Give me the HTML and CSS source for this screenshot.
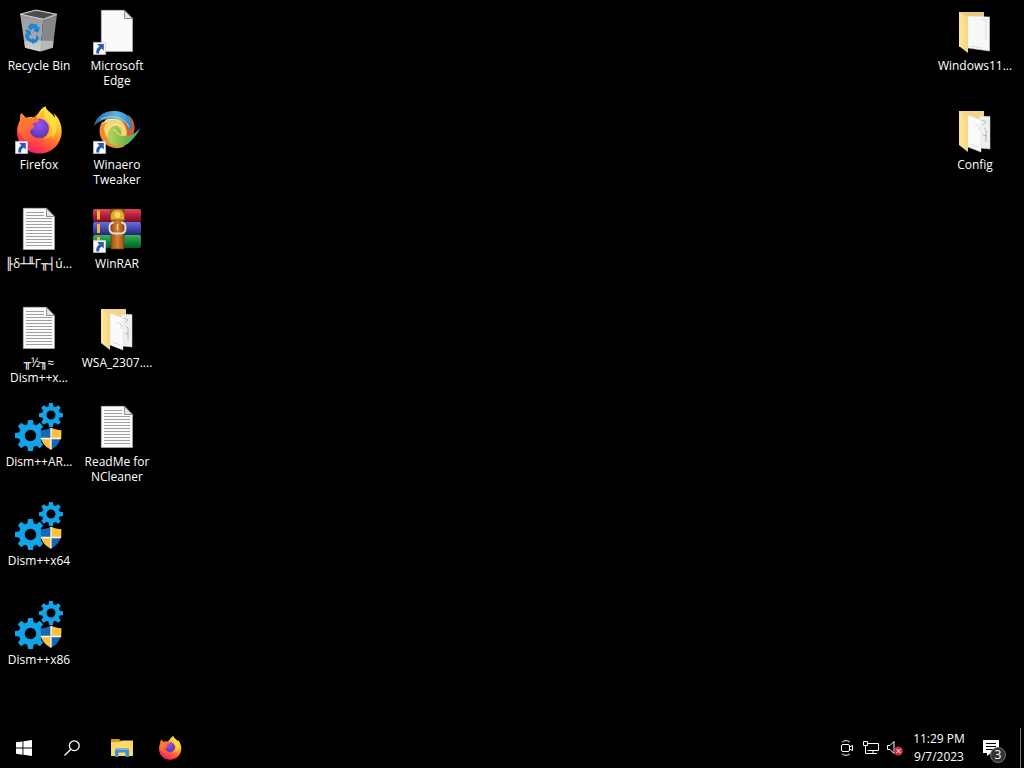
FILE: index.html
```html
<!DOCTYPE html>
<html lang="en">
<head>
<meta charset="utf-8">
<title>Desktop</title>
<link rel="stylesheet" href="styles.css">
</head>
<body>
<svg class="defs" aria-hidden="true">
  <defs>
    <linearGradient id="ffBody" x1="0.8" y1="0" x2="0.25" y2="1">
      <stop offset="0" stop-color="#fff44f"/><stop offset="0.3" stop-color="#ffc133"/><stop offset="0.55" stop-color="#ff7a2b"/><stop offset="0.8" stop-color="#ff3a4c"/><stop offset="1" stop-color="#e21a70"/>
    </linearGradient>
    <linearGradient id="ffFox" x1="0" y1="0" x2="0.6" y2="1">
      <stop offset="0" stop-color="#ff8f2c"/><stop offset="1" stop-color="#ff4f3c"/>
    </linearGradient>
    <radialGradient id="ffGlobe" cx="0.5" cy="0.3" r="0.7">
      <stop offset="0" stop-color="#9a4ff0"/><stop offset="1" stop-color="#5638b4"/>
    </radialGradient>
    <linearGradient id="binFront" x1="0" y1="0" x2="0" y2="1">
      <stop offset="0" stop-color="#9a9c9f"/><stop offset="0.7" stop-color="#a9abad"/><stop offset="1" stop-color="#d4d4d4"/>
    </linearGradient>
    <linearGradient id="folderBack" x1="0" y1="0" x2="1" y2="0">
      <stop offset="0" stop-color="#ffe7a4"/><stop offset="1" stop-color="#f3d681"/>
    </linearGradient>
    <linearGradient id="swirlBlue"><stop offset="0" stop-color="#2169a5"/><stop offset="0.6" stop-color="#5db5e4"/><stop offset="1" stop-color="#2b83bd"/></linearGradient>
    <linearGradient id="swirlGreen"><stop offset="0" stop-color="#b9d45a"/><stop offset="0.6" stop-color="#72b548"/><stop offset="1" stop-color="#4b9dab"/></linearGradient>
    <linearGradient id="bookRed" x1="0" y1="0" x2="0" y2="1"><stop offset="0" stop-color="#d94a5c"/><stop offset="0.5" stop-color="#b51e3a"/><stop offset="1" stop-color="#75102a"/></linearGradient>
    <linearGradient id="bookBlue" x1="0" y1="0" x2="0" y2="1"><stop offset="0" stop-color="#6970d8"/><stop offset="0.5" stop-color="#4347ae"/><stop offset="1" stop-color="#262870"/></linearGradient>
    <linearGradient id="bookGreen" x1="0" y1="0" x2="0" y2="1"><stop offset="0" stop-color="#3cb35c"/><stop offset="0.5" stop-color="#118b3b"/><stop offset="1" stop-color="#095a25"/></linearGradient>
    <linearGradient id="belt" x1="0" y1="0" x2="1" y2="0"><stop offset="0" stop-color="#9a4f17"/><stop offset="0.5" stop-color="#d58336"/><stop offset="1" stop-color="#9a4f17"/></linearGradient>
  </defs>

  <symbol id="shortcut" viewBox="0 0 48 48">
    <path fill="#fafafa" stroke="#b5b5b5" stroke-width="0.5" d="M0.3 35.3h12.4v12.4H0.3z"/>
    <path fill="#2b5aa8" d="M4.200 37h6.600v6.600l-2.100-2.100c-1.900 1.300-2.700 2.700-2.600 5H3.400c-.6-3.200.7-5.500 3-7z"/>
  </symbol>

  <symbol id="recycle" viewBox="0 0 48 48">
    <path fill="#64676a" d="M5.200 7.200 21 3l21 4.300-13.700 5z"/>
    <path fill="#494c4f" d="M8 7.500 21 4.300l17 3-10 4z"/>
    <path fill="url(#binFront)" d="m5.200 7.200 23.100 5.100-3 32.200-15.300-3.800z"/>
    <path fill="#85878a" d="M28.300 12.300 42 7.300l-4.200 33.400-12.500 3.800z"/>
    <path fill="#cfcfcf" d="m9.300 34.500 15-1 14.200.5-.7 6.700-12.500 3.800-15.300-3.800z" opacity=".7"/>
    <path fill="none" stroke="#d4d6d8" stroke-width="1" d="M5.200 7.200 21 3l21 4.300-13.700 5z"/>
    <g fill="#1e83d2">
      <path d="m12.500 21 3-4.500 6 .8 1.500 3 1.800-.6-1.300 6-5.500-2 1.800-1.200-1.500-1.500-2 2.500z"/>
      <path d="m10 22.500 5.200 1.100 1.200 5-1.900-.9-.8 2.300 2.500 1.900-.2 3.500-4.500-2.600-1.500-4 1.500-2.700z"/>
      <path d="m21.500 27 2.700 4.500-2.700 4-2.800.3v2l-3.800-4.200 3.900-2.800v1.800h1.400l.6-1.500z"/>
    </g>
  </symbol>

  <symbol id="page" viewBox="0 0 48 48">
    <path fill="#fafafa" stroke="#b9b9b9" stroke-width="0.6" d="M8.300 3.300h23.400l7.800 8v33.200H8.300z"/>
    <path fill="#e4e4e4" stroke="#777" stroke-width="0.8" d="M31.500 3.500v8h8z"/>
  </symbol>

  <symbol id="text" viewBox="0 0 48 48">
    <use href="#page"/>
    <path stroke="#a0a0a0" stroke-width="1" d="M11 7.500h18M11 10.500h18M11 13.500h26M11 16.500h26M11 19.500h26M11 22.500h26M11 25.500h26M11 28.500h26M11 31.500h26M11 34.500h26M11 37.500h26M11 40.500h26"/>
  </symbol>

  <symbol id="firefox" viewBox="0 0 48 48">
    <path fill="url(#ffBody)" d="M30.500.2c.5 4.700 7 6.600 9.500 11.800-.1-2-.7-3.500-1.500-5 5.200 4.200 8.400 11.500 8.200 18.700C46.300 38.500 36.500 47.500 24.300 47.500 11.500 47.500 2 38 2 25.500c0-4.500 1.200-7.500 3-11-.2-2.700.3-5.200 1.300-7.200 1.800 1.700 3.200 3 4.500 4.500 2.800-1 5.200-1.200 8-.4l4-3.300C24.500 5 27 1.500 30.500.2z"/>
    <circle cx="24" cy="22.500" r="10" fill="url(#ffGlobe)"/>
    <path fill="url(#ffFox)" d="M5 14.500c-.2-2.700.3-5.200 1.300-7.200l5 5.200c2.600-.8 4.800-.8 7 .1l3.300-3.600c-.2 2.500 1 4 2.800 5.500 0 2-6.200 2-6.800 4 1.500 1 2 2.500.6 4-2.200 1-3.500 2-3.500 4 1.500 4.500 6 6.200 11.200 5.100-5 7-16.200 5.200-19.700-2.500C3 26.500 2.500 19.500 5 14.500z"/>
    <path fill="#ffb92e" d="M23 12.500c4-1.500 8 .5 10.200 4 3.300 5.500 1 13.500-4.500 16.500 9-.5 14.500-9 12-18.500-2-4.800-7.500-8-9.500-11.800-4 2.500-6.300 5.200-8.200 9.800z"/>
    <path fill="#fff04c" opacity=".65" d="M30.500.2c.5 4.700 7 6.600 9.500 11.800 3 7 2 16-3 21 1.800-8-.4-13.500-4-18-4-4-6-8-2.500-14.800z"/>
  </symbol>

  <symbol id="winaero" viewBox="0 0 48 48">
    <circle cx="24" cy="25" r="16" fill="#f5cf68"/>
    <path fill="#dd562a" d="M35 9c9 6 8 18 2 25-3 3-6 4-9 3 6-5 7-9 5-15-1-3-3-6-5-8 3-1 6-3 7-5z"/>
    <path fill="#ef8a32" d="M9 16c-5 8-2 18 5 23 6 4 13 4 18 1-8-1-13-4-15-10-2-4-1-8 1-10-4-4-7-5-9-4z"/>
    <path fill="#f8d873" d="M12 18c-2 6 0 13 6 17 3 2 7 3 10 2-5-3-8-6-8-11 0-4 1-7 5-9-5-3-10-2-13 1z"/>
    <path fill="url(#swirlBlue)" d="M1 20C3 10 12 4 23 5c9 .5 16 7 16 13 0 3-1 5-3 7-1-8-7-12-14-12-8-1-15 1-21 7z"/>
    <path fill="none" stroke="#b9e0f4" stroke-width=".8" d="M8 13c11-5 23-2 28 8"/>
    <path fill="url(#swirlGreen)" d="M20 20c-6 4-8 13-2 18 6 4 15 3 20-3 4-4 8-9 9-13-4 5-9 8-14 8-3 0-5-1-5-4 0-4-4-7-8-6z"/>
    <path fill="none" stroke="#fff0ac" stroke-width=".9" d="M17 22c4-6 13-4 14 2 1 4-2 6-4 5-3-1-3-5-7-5M10 18c4-5 11-6 16-3"/>
  </symbol>

  <symbol id="winrar" viewBox="0 0 48 48">
    <path fill="url(#bookRed)" d="M1 4h46l1 1.500v10L47 17H1l-1-2V5.500z"/>
    <path fill="url(#bookBlue)" d="M1 17h46l1 1.500v9L47 30H1l-1-2v-9.500z"/>
    <path fill="url(#bookGreen)" d="M1 30h46l1 1.500v10L47 43H1l-1-2v-9.500z"/>
    <path fill="#f3b63c" d="M4 5.500h3v9H4zM4 19h3v9H4zM4 32h3v9H4z"/>
    <path fill="url(#belt)" stroke="#70360e" stroke-width=".7" d="M18 4h13v40H18z"/>
    <path fill="#e2a72c" stroke="#835213" stroke-width=".8" d="M17.500 11c0-9 14-9 14 0v4h-14z"/>
    <circle cx="24.500" cy="10" r="3" fill="#ffd75b"/>
    <path fill="none" stroke="#e4dfd4" stroke-width="2" d="M21 17.500c-3.500 0-4.500 2-4.500 5s1 6 4.500 6h7c3.500 0 4.500-3 4.500-6s-1-5-4.500-5"/>
    <path fill="none" stroke="#f4d69b" stroke-width="1.500" d="M24.500 19v6"/>
  </symbol>

  <symbol id="folder-one" viewBox="0 0 48 48">
    <path fill="#e9ca7c" d="M8 5h25v35H8z"/>
    <path fill="#f7f7f7" stroke="#ddd" stroke-width=".5" d="m17 9 21.500 1v34L17 41z"/>
    <path fill="url(#folderBack)" d="m8 5 9 5.500V46L8 39z"/>
    <path fill="none" stroke="#d9dcde" stroke-width="1" d="m30 12 5 1v20M20 39l11 2"/>
  </symbol>

  <symbol id="folder-two" viewBox="0 0 48 48">
    <path fill="#f2d588" d="M8 5h25v34H8z"/>
    <path fill="#efefef" stroke="#d5d5d5" stroke-width=".5" d="m28 10 11 .5V43l-10-1z"/>
    <path fill="none" stroke="#aaa" stroke-width=".8" d="m31 14 4 2-3 3m1 3 2 2v12m-3-7 4 1"/>
    <path fill="#fafafa" stroke="#ddd" stroke-width=".5" d="m17 9 13 5v32l-13-5z"/>
    <path fill="url(#folderBack)" d="m8 5 9 5.500V46L8 39z"/>
    <path fill="none" stroke="#d4d4d4" stroke-width=".8" d="m24 18 4 2v5M19 38l8 3"/>
  </symbol>

  <symbol id="gear" viewBox="-16 -16 32 32">
    <g fill="#11a4e9">
      <g id="teeth"><path id="tooth" d="M-3.500-10-2.500-16h5L3.500-10z"/><use href="#tooth" transform="rotate(90)"/><use href="#tooth" transform="rotate(180)"/><use href="#tooth" transform="rotate(270)"/></g>
      <use href="#teeth" transform="rotate(45)"/>
    </g>
    <circle r="9" fill="none" stroke="#11a4e9" stroke-width="6"/>
  </symbol>

  <symbol id="dism" viewBox="0 0 48 48">
    <use href="#gear" x="0" y="17" width="31" height="31"/>
    <use href="#gear" x="24" y="0" width="24" height="24"/>
    <path fill="#1768b3" d="M36 24.500c3 2 6.500 2.700 10.300 2.700C46.500 37 44 42.500 36 46.700 28 42.500 25.500 37 25.700 27.200c3.800 0 7.300-.7 10.300-2.700z"/>
    <path fill="#ffc03c" d="M36 24.500c3 2 6.500 2.700 10.300 2.700v8.300H36zM36 35.500v11.200c-5.800-3-9-7-10-11.200z"/>
    <path fill="none" stroke="#f7f7f7" stroke-width="1.300" d="M36 25v21.500M26 35.500h20"/>
  </symbol>
</svg>

<main class="desktop">
  <section class="icons" aria-label="Desktop programs">
    <button class="item"><svg class="icon"><use href="#recycle"/></svg><span class="label">Recycle Bin</span></button>
    <button class="item"><svg class="icon"><use href="#firefox"/><use href="#shortcut"/></svg><span class="label">Firefox</span></button>
    <button class="item"><svg class="icon"><use href="#text"/></svg><span class="label">╟δ┴╨Γ╥┤ú...</span></button>
    <button class="item"><svg class="icon"><use href="#text"/></svg><span class="label">╥½╖≈<br>Dism++x...</span></button>
    <button class="item"><svg class="icon"><use href="#dism"/></svg><span class="label">Dism++AR...</span></button>
    <button class="item"><svg class="icon"><use href="#dism"/></svg><span class="label">Dism++x64</span></button>
    <button class="item"><svg class="icon"><use href="#dism"/></svg><span class="label">Dism++x86</span></button>
  </section>
  <section class="icons" aria-label="Desktop files">
    <button class="item"><svg class="icon"><use href="#page"/><use href="#shortcut"/></svg><span class="label">Microsoft<br>Edge</span></button>
    <button class="item"><svg class="icon"><use href="#winaero"/><use href="#shortcut"/></svg><span class="label">Winaero<br>Tweaker</span></button>
    <button class="item"><svg class="icon"><use href="#winrar"/><use href="#shortcut"/></svg><span class="label">WinRAR</span></button>
    <button class="item"><svg class="icon"><use href="#folder-two"/></svg><span class="label">WSA_2307....</span></button>
    <button class="item"><svg class="icon"><use href="#text"/></svg><span class="label">ReadMe for<br>NCleaner</span></button>
  </section>
  <section class="icons icons-end" aria-label="Desktop folders">
    <button class="item"><svg class="icon"><use href="#folder-one"/></svg><span class="label">Windows11...</span></button>
    <button class="item"><svg class="icon"><use href="#folder-two"/></svg><span class="label">Config</span></button>
  </section>
</main>

<footer class="taskbar">
  <div class="tasks">
    <button class="task" aria-label="Start"><svg width="16" height="16" viewBox="0 0 16 16"><path fill="#fff" d="m0 2.300 6.500-.9v6.200H0zM7.400 1.200 16 0v7.600H7.400zM0 8.500h6.500v6.200L0 13.800zM7.400 8.500H16V16l-8.600-1.200z"/></svg></button>
    <button class="task" aria-label="Search"><svg width="16" height="16" viewBox="0 0 16 16"><g fill="none" stroke="#fff" stroke-width="1.300"><circle cx="10.300" cy="5.700" r="4.900"/><path d="M6.800 9.200.5 15.500"/></g></svg></button>
  </div>
  <div class="tasks">
    <button class="task" aria-label="File Explorer"><svg width="24" height="24" viewBox="0 0 24 24"><path fill="#d99a22" d="M1 3h8l2 2h12v3H1z"/><path fill="#ffd766" d="M1 6h9l2-1.500h11V20H1z"/><path fill="#3a91d0" d="M5 12.500h14V21h-3.500v-4.500h-7V21H5z"/><path fill="#72b5df" d="M5 12.500h14V14H5z"/></svg></button>
    <button class="task" aria-label="Firefox"><svg width="24" height="24"><use href="#firefox"/></svg></button>
  </div>
  <div class="tray">
    <button class="tray-item" aria-label="Meet Now"><svg width="16" height="16" viewBox="0 0 16 16"><g fill="none" stroke="#fff"><rect x="2.500" y="4.500" width="8" height="7" rx="1.500"/><path d="m10.500 7 3-1.500v5l-3-1.500M3 2.300C5 .2 9 .2 11 2.300M3 13.700c2 2.100 6 2.100 8 0"/></g></svg></button>
    <button class="tray-item" aria-label="Network"><svg width="16" height="16" viewBox="0 0 16 16"><g fill="none" stroke="#fff"><path d="M5 3.500h10.500v7H4.500M10 10.500v3M6 13.500h8M2.500 5.500v8H6"/><path d="M.5 1.500h4v4h-4z"/></g></svg></button>
    <button class="tray-item" aria-label="Volume muted"><svg width="16" height="16" viewBox="0 0 16 16"><path fill="none" stroke="#fff" d="M.5 5.500H3l4-4v12l-4-4H.5z"/><circle cx="11.500" cy="11" r="4.500" fill="#c9303c"/><path stroke="#fff" d="m9.500 9 4 4m0-4-4 4"/></svg></button>
    <button class="clock"><time>11:29 PM</time><time>9/7/2023</time></button>
    <button class="notices" aria-label="3 notifications"><svg width="16" height="16" viewBox="0 0 16 16"><path fill="#fff" d="M0 0h16v13H8l-4 3v-3H0z"/><path stroke="#000" d="M3 3.500h10M3 6.500h10M3 9.500h7"/></svg><span class="badge">3</span></button>
    <button class="show-desktop" aria-label="Show desktop"></button>
  </div>
</footer>
</body>
</html>
```
FILE: styles.css
```css
* {
  box-sizing: border-box;
}

body {
  display: flex;
  flex-direction: column;
  min-height: 100vh;
  margin: 0;
  background: #000;
  color: #fff;
  font-family: "Open Sans", "Noto Sans", "DejaVu Sans", sans-serif;
  font-size: 12px;
  line-height: 15px;
}

button {
  margin: 0;
  padding: 0;
  border: 0;
  background: none;
  color: inherit;
  font: inherit;
}

.defs {
  position: absolute;
  width: 0;
  height: 0;
}

.desktop {
  display: flex;
  flex: 1;
  padding-right: 10px;
}

.icons {
  display: grid;
  grid-auto-rows: 99px;
  grid-template-columns: 78px;
  align-content: start;
}

.icons-end {
  margin-left: auto;
}

.item {
  display: flex;
  flex-direction: column;
  align-items: center;
  gap: 3px;
  padding-top: 7px;
}

.icon {
  width: 48px;
  height: 48px;
}

.label {
  text-align: center;
  white-space: nowrap;
}

.taskbar {
  display: flex;
  gap: 2px;
  height: 40px;
}

.tasks {
  display: flex;
}

.task {
  display: grid;
  place-items: center;
  width: 48px;
}

.tray {
  display: flex;
  margin-left: auto;
}

.tray-item {
  display: grid;
  place-items: center;
  width: 24px;
}

.clock {
  display: flex;
  flex-direction: column;
  justify-content: center;
  gap: 3px;
  width: 64px;
  padding-bottom: 2px;
}

.clock time {
  width: 100%;
  text-align: center;
  white-space: nowrap;
}

.notices {
  position: relative;
  display: grid;
  place-items: center;
  width: 40px;
}

.badge {
  position: absolute;
  right: 5px;
  bottom: 5px;
  width: 16px;
  height: 16px;
  border: 1px solid #777;
  border-radius: 50%;
  background: #333;
  font-size: 12px;
  line-height: 14px;
}

.show-desktop {
  width: 4px;
  margin-left: 9px;
  border-left: 1px solid #777;
}
```
